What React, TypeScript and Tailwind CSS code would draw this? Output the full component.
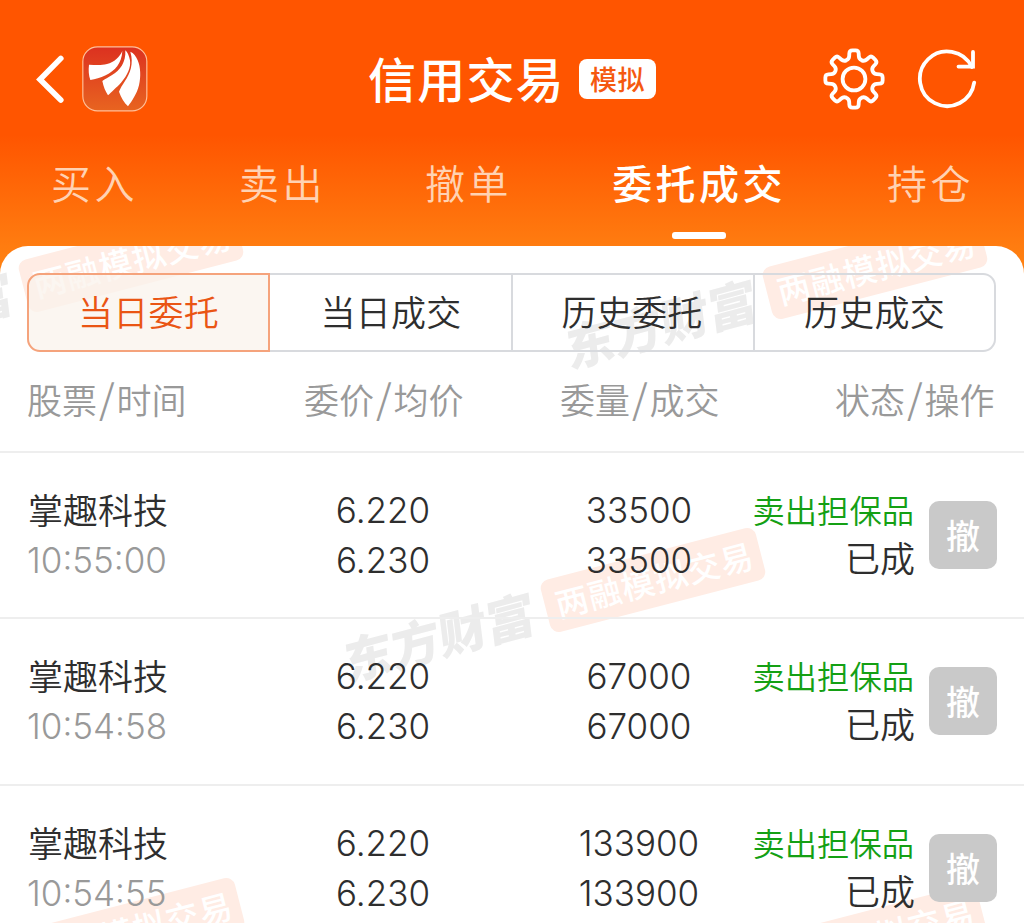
import React from 'react';

const CJK = "font-['Noto_Sans_CJK_SC',sans-serif]";
const NUM = "font-['Inter','Noto_Sans_CJK_SC',sans-serif]";

const orders = [
  { name: '掌趣科技', time: '10:55:00', price: '6.220', avg: '6.230', amount: '33500', filled: '33500', height: 'h-[166px]' },
  { name: '掌趣科技', time: '10:54:58', price: '6.220', avg: '6.230', amount: '67000', filled: '67000', height: 'h-[167px]' },
  { name: '掌趣科技', time: '10:54:55', price: '6.220', avg: '6.230', amount: '133900', filled: '133900', height: 'h-[167px]' },
];

function gearPath(): string {
  const pts: [number, number][] = [];
  const add = (r: number, deg: number) => {
    const a = (deg * Math.PI) / 180;
    pts.push([Math.sin(a) * r, -Math.cos(a) * r]);
  };
  for (let i = 0; i < 8; i++) {
    const c = i * 45;
    add(29, c - 9);
    add(29, c + 9);
    add(20.4, c + 14);
    add(20.4, c + 31);
  }
  const n = pts.length;
  let d = '';
  for (let i = 0; i < n; i++) {
    const p = pts[i];
    const prev = pts[(i + n - 1) % n];
    const next = pts[(i + 1) % n];
    const cut = (q: [number, number]) => {
      const l = Math.hypot(q[0] - p[0], q[1] - p[1]);
      const t = Math.min(3 / l, 0.5);
      return [p[0] + (q[0] - p[0]) * t, p[1] + (q[1] - p[1]) * t];
    };
    const a = cut(prev);
    const b = cut(next);
    d += `${i ? 'L' : 'M'}${a[0].toFixed(2)} ${a[1].toFixed(2)}Q${p[0].toFixed(2)} ${p[1].toFixed(2)} ${b[0].toFixed(2)} ${b[1].toFixed(2)}`;
  }
  return d + 'Z';
}

function Logo() {
  return (
    <svg className="ml-[18px] h-[66px] w-[66px]" viewBox="185 47 198 198">
      <defs>
        <linearGradient id="logo" x1="0" y1="0" x2="0" y2="1">
          <stop offset="0" stopColor="#dc3120" />
          <stop offset="1" stopColor="#e86420" />
        </linearGradient>
      </defs>
      <rect x="187.5" y="49.5" width="192" height="192" rx="44" fill="url(#logo)" stroke="#ffc09a" strokeWidth="3.5" />
      <path fill="#fff" d="M306 62C298 80 282 96 260 101C240 106 222 103 206 103C204 118 205 136 210 149C225 147 240 143 256 135C284 121 304 100 306 62Z" />
      <path fill="#fff" d="M315 60C317 95 300 121 274 135C264 141 254 147 246 152C249 169 256 184 263 195C272 186 290 170 302 157C322 134 332 112 329 90C326 76 322 66 315 60Z" />
      <path fill="#fff" d="M330 64C341 100 329 130 314 152C306 164 300 174 296 184C302 202 312 218 323 228C334 214 350 190 356 165C362 140 361 110 352 90C347 78 340 68 330 64Z" />
    </svg>
  );
}

function Header() {
  return (
    <header className="flex h-[140px] items-start pt-[46px]">
      <div className="flex w-[320px] items-center pl-[34px]">
        <svg className="h-[50px] w-[30px]" viewBox="0 0 30 50" fill="none" stroke="#fff" strokeWidth="5.6" strokeLinecap="round" strokeLinejoin="miter">
          <path d="M26.8 4.4L6 25.5L26.8 46" />
        </svg>
        <Logo />
      </div>
      <div className="flex h-[66px] w-[384px] items-center pl-[48px]">
        <h1 className="-mt-[4px] w-[199px] whitespace-nowrap text-[48px] font-medium leading-[62px] tracking-[1.2px] text-white">信用交易</h1>
        <span className="ml-[12px] flex h-[40px] w-[77px] justify-center rounded-[8px] bg-white text-[27px] font-medium leading-[40px] tracking-[0.5px] text-[#f5590f]">模拟</span>
      </div>
      <div className="flex h-[66px] items-center pl-[118px]">
        <svg className="h-[64px] w-[64px]" viewBox="-32 -32 64 64" fill="none" stroke="#fff" strokeWidth="3.8">
          <path d={gearPath()} strokeLinejoin="round" />
          <circle r="11.4" />
        </svg>
        <svg className="ml-[29px] h-[64px] w-[64px]" viewBox="-32 -32 64 64" fill="none" stroke="#fff" strokeWidth="3.8" strokeLinecap="round">
          <path d="M27.2 3.6A27.3 27.3 0 1 1 24.8 -12" />
          <path d="M26 -27V-12.4H11.5" />
        </svg>
      </div>
    </header>
  );
}

function Tabs() {
  const base = 'whitespace-nowrap text-[40px] leading-[60px] tracking-[3.4px]';
  return (
    <nav className="flex h-[106px] pt-[12px]">
      <span className={`${base} w-[188px] pl-[51px] font-[350] text-[#ffd2b3]`}>买入</span>
      <span className={`${base} w-[186px] pl-[51px] font-[350] text-[#ffd2b3]`}>卖出</span>
      <span className={`${base} w-[188px] pl-[51px] font-[350] text-[#ffd2b3]`}>撤单</span>
      <div className="flex w-[274px] flex-col items-center">
        <span className={`${base} font-medium text-white`}>委托成交</span>
        <span className="mt-[20px] h-[7px] w-[54px] rounded-[3px] bg-white" />
      </div>
      <span className={`${base} pl-[51px] font-[350] text-[#ffd2b3]`}>持仓</span>
    </nav>
  );
}

function Watermark({ place }: { place: string }) {
  return (
    <div className={`absolute ${place}`}>
      <div className="absolute left-[-111px] top-[-27px] flex h-[54px] w-[222px] rotate-[-14.5deg] items-center justify-center rounded-[9px] bg-[#ffece4]">
        <span className="-mt-[3px] whitespace-nowrap pl-[3px] text-[33px] font-medium leading-[54px] tracking-[1px] text-white">两融模拟交易</span>
      </div>
      <div className="absolute left-[-314px] top-[25px] flex h-[60px] w-[200px] rotate-[-15deg] skew-x-[-8deg] items-center justify-center">
        <span className="whitespace-nowrap text-[49px] font-black leading-[60px] text-[#ececec]">东方财富</span>
      </div>
    </div>
  );
}

function Segments() {
  const cell = 'flex justify-center text-[35px] font-[350] leading-[72px] tracking-[0.3px]';
  return (
    <div className="relative ml-[27px] flex h-[79px] w-[969px]">
      <div className={`${cell} w-[243px] rounded-l-[13px] border-2 border-[#f5a37c] bg-[#faf3ec]/75 text-[#ea5514]`}>当日委托</div>
      <div className={`${cell} w-[242px] border-y-2 border-[#d8dade] text-[#2e2e2e]`}>当日成交</div>
      <div className={`${cell} -ml-[1px] w-[244px] border-2 border-[#d8dade] pr-[2px] text-[#2e2e2e]`}>历史委托</div>
      <div className={`${cell} w-[241px] rounded-r-[13px] border-2 border-l-0 border-[#d8dade] text-[#2e2e2e]`}>历史成交</div>
    </div>
  );
}

function Heading({ a, b }: { a: string; b: string }) {
  return (
    <>
      {a}
      <span className="inline-block w-[19.5px] text-center text-[40px] leading-none">/</span>
      {b}
    </>
  );
}

function Order({ o }: { o: (typeof orders)[number] }) {
  const num = `${NUM} text-[35px] font-[350] leading-[50px]`;
  return (
    <div className={`relative flex border-t-2 border-[#eeeeee] pt-[32px] text-[#2e2e2e] ${o.height}`}>
      <div className="w-[270px] pl-[28px]">
        <div className="-mt-[1px] mb-[1px] text-[35px] font-[350] leading-[50px]">{o.name}</div>
        <div className={`${num} -ml-[1px] text-[#999999]`}>{o.time}</div>
      </div>
      <div className={`${num} w-[226px] text-center`}>
        <div>{o.price}</div>
        <div>{o.avg}</div>
      </div>
      <div className={`${num} w-[286px] text-center`}>
        <div>{o.amount}</div>
        <div>{o.filled}</div>
      </div>
      <div className="-ml-[32px] -mt-[1px] w-[165px] whitespace-nowrap text-right font-[350]">
        <div className="pr-[1px] text-[32.3px] leading-[50px] text-[#14a014]">卖出担保品</div>
        <div className="text-[35px] leading-[46px]">已成</div>
      </div>
      <button className="ml-[14px] mt-[16px] flex h-[68px] w-[68px] justify-center rounded-[10px] bg-[#c9c9c9] text-[34px] font-medium leading-[68px] text-white">撤</button>
    </div>
  );
}

export default function App() {
  return (
    <div className={`${CJK} h-[923px] w-[1024px] overflow-hidden bg-[linear-gradient(180deg,#ff5500_0px,#ff5500_135px,#ff7c10_246px,#ff8412_280px)]`}>
      <Header />
      <Tabs />
      <main className="relative h-[677px] overflow-hidden rounded-t-[28px] bg-white pt-[27px]">
        <Watermark place="left-[131px] top-[14px]" />
        <Watermark place="left-[875px] top-[21px]" />
        <Watermark place="left-[653px] top-[334px]" />
        <Watermark place="left-[132px] top-[684px]" />
        <Watermark place="left-[874px] top-[691px]" />
        <Segments />
        <div className="relative flex h-[99px] pt-[22px] text-[35px] font-[350] leading-[50px] text-[#999999]">
          <span className="w-[277px] pl-[27px]"><Heading a="股票" b="时间" /></span>
          <span className="w-[256px] pl-[27px]"><Heading a="委价" b="均价" /></span>
          <span className="w-[275px] pl-[27px]"><Heading a="委量" b="成交" /></span>
          <span className="pl-[27px]"><Heading a="状态" b="操作" /></span>
        </div>
        {orders.map((o) => (
          <Order key={o.time} o={o} />
        ))}
      </main>
    </div>
  );
}
